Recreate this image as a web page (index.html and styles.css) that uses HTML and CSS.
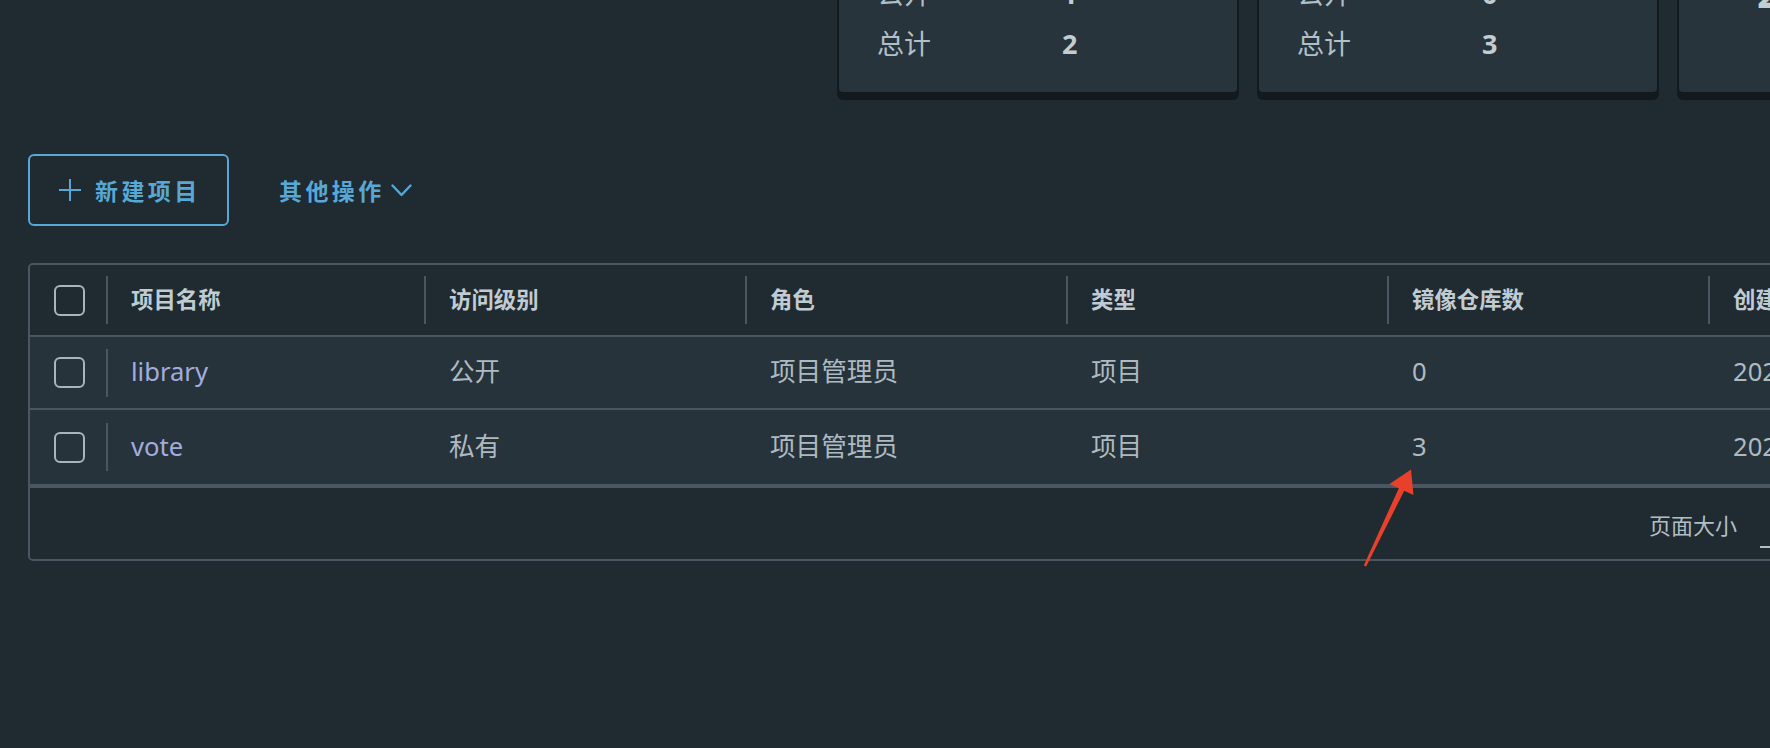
FILE: index.html
```html
<!DOCTYPE html>
<html lang="zh-CN">
<head>
<meta charset="utf-8">
<title>项目</title>
<link rel="stylesheet" href="styles.css">
</head>
<body>
<div class="page">
  <section class="summary">
    <div class="card">
      <div class="card-row"><span class="card-label">公开</span><span class="card-value">1</span></div>
      <div class="card-row"><span class="card-label">总计</span><span class="card-value">2</span></div>
    </div>
    <div class="card">
      <div class="card-row"><span class="card-label">公开</span><span class="card-value">0</span></div>
      <div class="card-row"><span class="card-label">总计</span><span class="card-value">3</span></div>
    </div>
    <div class="card card-quota">
      <div class="card-big">2</div>
    </div>
  </section>

  <section class="toolbar">
    <button class="btn-outline" type="button">
      <svg class="plus" width="22" height="22" viewBox="0 0 22 22"><path d="M11 0V22M0 11H22" stroke="currentColor" stroke-width="2" fill="none"/></svg>
      <span>新建项目</span>
    </button>
    <button class="btn-link" type="button">
      <span>其他操作</span>
      <svg class="chev" width="21" height="13" viewBox="0 0 21 13"><path d="M1.5 1.5L10.5 11L19.5 1.5" stroke="currentColor" stroke-width="2.4" fill="none" stroke-linecap="round" stroke-linejoin="round"/></svg>
    </button>
  </section>

  <section class="datagrid">
    <div class="dg-row dg-head">
      <div class="dg-cell dg-check"><span class="checkbox"></span></div>
      <div class="dg-cell sep">项目名称</div>
      <div class="dg-cell sep">访问级别</div>
      <div class="dg-cell sep">角色</div>
      <div class="dg-cell sep">类型</div>
      <div class="dg-cell sep">镜像仓库数</div>
      <div class="dg-cell sep">创建时间</div>
    </div>
    <div class="dg-row dg-body">
      <div class="dg-cell dg-check"><span class="checkbox"></span></div>
      <div class="dg-cell sep"><span class="link">library</span></div>
      <div class="dg-cell">公开</div>
      <div class="dg-cell">项目管理员</div>
      <div class="dg-cell">项目</div>
      <div class="dg-cell">0</div>
      <div class="dg-cell">2021/11/8 下午3:12</div>
    </div>
    <div class="dg-row dg-body dg-last">
      <div class="dg-cell dg-check"><span class="checkbox"></span></div>
      <div class="dg-cell sep"><span class="link">vote</span></div>
      <div class="dg-cell">私有</div>
      <div class="dg-cell">项目管理员</div>
      <div class="dg-cell">项目</div>
      <div class="dg-cell">3</div>
      <div class="dg-cell">2021/11/8 下午3:45</div>
    </div>
    <div class="dg-footer">
      <div class="pagination">
        <span class="page-size-label">页面大小</span>
        <span class="page-size-select">15</span>
        <span class="page-range">1 - 2 共计 2 条记录</span>
      </div>
    </div>
  </section>

  <svg class="annotation" width="1770" height="748" viewBox="0 0 1770 748">
    <polygon points="1411,469.5 1413.5,495 1404.2,490.8 1366.2,566.5 1363.8,565.5 1398.8,488.2 1389.5,484" fill="#e8412b"/>
  </svg>
</div>
</body>
</html>
```

FILE: styles.css
```css
* { box-sizing: border-box; }

html, body {
  margin: 0;
  padding: 0;
  background: #1f2a31;
  overflow: hidden;
}

body {
  width: 1770px;
  height: 748px;
  font-family: "Noto Sans", "Noto Sans CJK SC", sans-serif;
  color: #adb9c0;
}

.page {
  position: relative;
  width: 1770px;
  height: 748px;
  overflow: hidden;
}

/* summary cards */
.summary {
  display: flex;
  gap: 22px;
  padding-left: 839px;
  margin-top: -51px;
  width: 2400px;
}

.card {
  flex: 0 0 398px;
  background: #27343b;
  border-radius: 4px;
  box-shadow: 0 6px 0 2px #131a1e;
  padding: 20px 0 23px 38px;
}

.card-row {
  display: flex;
  align-items: center;
  height: 50px;
}

.card-label {
  width: 185px;
  font-size: 27px;
  line-height: 50px;
  color: #b3bfc6;
}

.card-value {
  font-size: 27px;
  font-weight: 700;
  line-height: 50px;
  color: #c2cdd3;
}

.card-quota {
  padding-left: 78px;
}

.card-big {
  font-size: 40px;
  font-weight: 700;
  line-height: 48px;
  height: 100px;
  color: #c2cdd3;
}

/* toolbar */
.toolbar {
  display: flex;
  align-items: center;
  gap: 50px;
  margin-top: 62px;
  padding-left: 28px;
  height: 72px;
}

.btn-outline,
.btn-link {
  font-family: "Noto Sans", "Noto Sans CJK SC", sans-serif;
  font-size: 23px;
  font-weight: 700;
  letter-spacing: 3.4px;
  color: #58a8d5;
  background: transparent;
  cursor: pointer;
  display: flex;
  align-items: center;
  padding: 0;
  margin: 0;
}

.btn-outline {
  height: 72px;
  width: 201px;
  border: 2px solid #58a8d5;
  border-radius: 6px;
  padding-left: 29px;
  gap: 14px;
}

.btn-link {
  border: none;
  gap: 6px;
  height: 72px;
}

.plus { flex: 0 0 auto; }
.chev { flex: 0 0 auto; }

/* datagrid */
.datagrid {
  margin-top: 37px;
  margin-left: 28px;
  width: 2056px;
  border: 2px solid #4a5763;
  border-radius: 5px;
  overflow: hidden;
}

.dg-row {
  display: grid;
  grid-template-columns: 76px 318px 321px 321px 321px 321px 1fr;
  align-items: center;
}

.dg-head {
  height: 72px;
  background: #1f2a31;
  border-bottom: 2px solid #4a5763;
  font-size: 22.4px;
  font-weight: 700;
  color: #c1ccd2;
}

.dg-body {
  height: 73px;
  background: #26333a;
  border-bottom: 2px solid #4a5763;
  font-size: 25.6px;
  color: #aebac1;
}

.dg-body.dg-last {
  height: 78px;
  border-bottom: 4px solid #4a5763;
}

.dg-cell {
  position: relative;
  display: flex;
  align-items: center;
  height: 100%;
  padding-left: 25px;
  white-space: nowrap;
  line-height: 1.2;
}

.dg-check {
  padding-left: 24px;
}

.dg-cell.sep::before {
  content: "";
  position: absolute;
  left: 0;
  top: 50%;
  width: 2px;
  height: 48px;
  margin-top: -24px;
  background: #4a5763;
}

.checkbox {
  display: block;
  width: 31px;
  height: 31px;
  border: 2px solid #a8b5bd;
  border-radius: 6px;
}

.link {
  color: #a3acdf;
}

.dg-footer {
  display: flex;
  align-items: center;
  justify-content: flex-end;
  height: 71px;
  background: #1f2a31;
  padding-right: 24px;
}

.pagination {
  display: flex;
  align-items: center;
  font-size: 22px;
  color: #b2bec5;
}

.page-size-label {
  width: 88px;
  white-space: nowrap;
}

.page-size-select {
  width: 72px;
  margin-left: 23px;
  padding-left: 16px;
  padding-bottom: 4px;
  border-bottom: 2px solid #b2bec5;
  margin-top: 20px;
  color: #b2bec5;
  line-height: 1;
}

.page-range {
  width: 190px;
  margin-left: 36px;
  white-space: nowrap;
}

.annotation {
  position: absolute;
  left: 0;
  top: 0;
  pointer-events: none;
}
```
